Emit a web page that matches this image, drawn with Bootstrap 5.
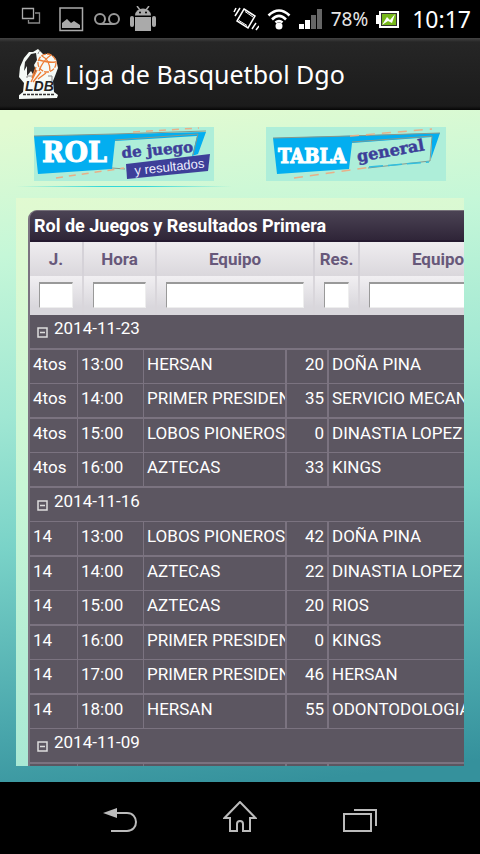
<!DOCTYPE html>
<html lang="es">
<head>
<meta charset="utf-8">
<meta name="viewport" content="width=device-width, initial-scale=1">
<title>Liga de Basquetbol Dgo</title>
<link href="https://cdn.jsdelivr.net/npm/bootstrap@5.3.0/dist/css/bootstrap.min.css" rel="stylesheet">
<style>
body{font-family:Roboto,"Liberation Sans",sans-serif;font-size:17px;line-height:20px;background:#000}
.status-bar{height:38px;padding:0 9px 0 21px;font-family:"Noto Sans",sans-serif;color:#e6e6e6}
.status-bar svg,.app-bar svg,.sys-nav svg,.tab-link svg{display:block;flex:none}
.left-icons{gap:10px}
.battery-text{font-size:19px}
.clock{font-size:23px;color:#fff}
.app-bar{height:72px;padding-left:19px;background:linear-gradient(#444 0,#262626 4px,#1b1b1b 68px,#050505 72px)}
.app-title{font-family:"Noto Sans",sans-serif;font-size:25px;line-height:36px;color:#fff}
.page-area{min-height:0;background:linear-gradient(173deg,#e3fbd1 2%,#c5f7d8 20%,#a0e7d3 42%,#7ad3c8 60%,#4ba8ad 84%,#35919c 97%);padding:17px 16px 16px}
.tab-link{display:block;padding-bottom:6px}
.tab-link.active{background:linear-gradient(90deg,transparent,#34d8d8 40%,#34d8d8 60%,transparent) bottom/100% 1px no-repeat}
.panel-box{background:linear-gradient(170deg,#e1fad1,#c8f6d6 45%,#a0e5d4);margin-top:11px;padding:12px 0 0 12px;min-height:0}
.grid-box{width:620px;border-left:2px solid #7b7380;border-top:1px solid #77727a;border-radius:9px 9px 0 0;overflow:hidden;background:#5c5661}
.grid-title{height:31px;padding:0 4px;font-size:18px;line-height:30px;color:#fff;background:linear-gradient(#4b4354,#2f2538);border-bottom:2px solid #251a30}
.grid-box table{table-layout:fixed;border-collapse:separate;border-spacing:0;margin:0}
.head-grid th{height:34px;padding:0;text-align:center;font-size:17px;color:#67587a;background:linear-gradient(#efedf0,#dad7dc);border-right:2px solid #d5d2d8}
.head-grid td{height:39px;padding:6px 9px 7px;vertical-align:top;background:linear-gradient(#f1eff2,#d9d7dc 80%);border-right:2px solid #d9d6db}
.filter-box{display:block;width:100%;height:26px;padding:0 4px;border:2px solid;border-width:2px 1px 1px 1px;border-color:#999 #eee #eee #999;border-radius:0;background:#fff}
.data-grid td{height:34px;padding:0 3px;line-height:29px;vertical-align:top;color:#fff;white-space:nowrap;overflow:hidden;border-right:1px solid #7b7380;border-bottom:1px solid #7b7380}
.data-grid tr:nth-child(odd) td{height:35px;border-bottom-width:2px}
.data-grid td:nth-child(3),.data-grid td:nth-child(4){border-right-width:2px}
.data-grid td:nth-child(4){text-align:right}
.data-grid .date-row td{padding-left:7px;line-height:26px}
.fold-btn{width:11px;height:11px;padding:0;border:0;background:none;margin-right:6px;display:inline-block;line-height:0;vertical-align:-4px}
.fold-btn svg{display:block}
.sys-nav{height:72px;padding:0 103px}
.sys-nav button{padding:0;border:0;background:none}
.scroll-clip{height:100vh}
</style>
<script src="https://cdn.jsdelivr.net/npm/bootstrap@5.3.0/dist/js/bootstrap.bundle.min.js"></script>
</head>
<body>
<div class="scroll-clip d-flex flex-column overflow-hidden">
<div class="status-bar flex-shrink-0 d-flex align-items-center justify-content-between">
  <div class="left-icons d-flex align-items-center">
    <svg class="me-2" width="20" height="24" viewBox="0 0 20 24" fill="none" stroke="#aaa" stroke-width="1.3"><path d="M1.500 1.500h11v10h-11z"/><path stroke="#888" d="M14 6h4.500v10h-11v-3"/></svg>
    <svg width="25" height="25" viewBox="0 0 25 25"><path fill="none" stroke="#aaa" stroke-width="1.500" d="M1 1h22.500v22.500H1z"/><path fill="#aaa" d="M3 21v-5l5-4 4 4 3-2 6 4v3z"/></svg>
    <svg width="26" height="14" viewBox="0 0 26 14" fill="none" stroke="#999" stroke-width="2"><circle cx="6" cy="7" r="5"/><circle cx="20" cy="7" r="5"/><path d="M6 12h14"/></svg>
    <svg width="26" height="26" viewBox="0 0 26 26" fill="#aaa"><path d="M5 9.500a8 7 0 0 1 16 0z"/><path d="M7 0l3 4M19 0l-3 4" stroke="#aaa" stroke-width="1.500"/><circle cx="10" cy="6.500" r="1" fill="#000"/><circle cx="16" cy="6.500" r="1" fill="#000"/><path d="M5 11h16v14H5z"/><rect y="10" width="4" height="11" rx="2"/><rect x="22" y="10" width="4" height="11" rx="2"/></svg>
  </div>
  <div class="d-flex align-items-center gap-2">
    <svg width="26" height="24" viewBox="0 0 26 24" fill="none" stroke="#fff" stroke-width="1.500"><path d="M11 2l11 7-7 12-11-7z"/><path stroke-width="1" d="M12 4.500l8 5.500M6 13.500l8 5"/><path d="M1 5l2-4M2 9l5-8M19 22l4-6M23 23l3-4"/></svg>
    <svg width="24" height="22" viewBox="0 0 24 22"><g fill="none" stroke="#fff" stroke-width="2.600"><path d="M1.500 7.500q10.500-10 21 0M5 11.500q7-7 14 0M8.500 14.500q3.500-3 7 0"/></g><circle cx="12" cy="18" r="3.500" fill="#fff"/></svg>
    <svg class="ms-n1" width="24" height="20" viewBox="0 0 24 20"><path fill="#fff" d="M0 15h5v5H0zM6 11h5v9H6z"/><path fill="#666" d="M12 6h5v14h-5zM18 0h5v20h-5z"/></svg>
    <span class="battery-text">78%</span>
    <svg width="24" height="17" viewBox="0 0 24 17"><path fill="#fff" d="M3 0h20v17H3v-4H0V4h3z"/><path fill="#333" d="M5 2h16v13H5z"/><path fill="#77b81b" d="M6 3h14v11H6z"/><path fill="#fff" d="M6 14l5-8 3 3 5-6-3 9-4-2z"/></svg>
    <span class="clock ms-1">10:17</span>
  </div>
</div>
<header class="app-bar flex-shrink-0 d-flex align-items-center">
  <svg width="46" height="50" viewBox="0 0 46 50"><path fill="#f5faf7" d="M5 9l5-6 4 0 5-3 5 5 7 0 6 5 2 9-3 8-2 5 1 11 4 3-1 3-38 1-1-3 5-4 1-9-5-6 1-10z"/><path fill="#292929" d="M12 5l5-1 1 7-3 5 2 6-2 5-3-5-4 5 0-10-3 5 1-9z"/><g fill="none" stroke="#ed7d36" stroke-width="1.300"><circle cx="28" cy="14" r="9" stroke-dasharray="5 1"/><path d="M20 11q11 3 16 2M23 7q8 4 8 15M32 6q-8 5-12 16M18 21l-6 12M22 23l-8 10M27 24l-8 6M17 18l-4 11"/></g><path fill="none" stroke="#888" d="M19 5q1-5 4-1M8 29v-2h5M29 27h4v5"/><text x="6" y="42" font-family="Liberation Sans" font-size="14" font-weight="bold" font-style="italic" fill="#222">LDB</text><path stroke="#333" stroke-width="1.500" stroke-dasharray="3 1" d="M4 45.500h32"/></svg>
  <h1 class="app-title fw-normal m-0">Liga de Basquetbol Dgo</h1>
</header>
<main class="page-area flex-fill d-flex flex-column overflow-hidden">
  <nav class="row gx-3 flex-nowrap flex-shrink-0">
    <div class="col-6"><a class="tab-link active" href="#rol" aria-label="Rol de juego y resultados">
      <svg class="mx-auto" width="180" height="54" viewBox="0 0 180 54"><path fill="#aeeed9" d="M0 0h180v54H0z"/><path fill="#03aef0" d="M0 9l172-4-8 22-6 2 5-20-82 5-3 28-74 5z"/><path fill="none" stroke="#87998c" d="M0 9l80-2 92-3M81 13l83-6-5 21M78 41l13 1"/><path fill="none" stroke="#e8b088" stroke-width="1.500" stroke-dasharray="7 6" d="M99 5l66-4M22 51l68-10"/><path fill="#3d3f99" d="M92 37l84-10-2 17-81 8z"/><g font-family="DejaVu Serif,serif" font-weight="bold"><text x="8" y="35" font-size="27" fill="#fff" stroke="#fff">ROL</text><text transform="translate(88 31) rotate(-5)" font-size="15" fill="#3d3f99" stroke="#3d3f99" stroke-width=".5">de juego</text></g><text transform="translate(101 48) rotate(-6)" font-family="Liberation Sans" font-size="13" fill="#eef">y resultados</text></svg>
    </a></div>
    <div class="col-6"><a class="tab-link" href="#tabla" aria-label="Tabla general">
      <svg class="mx-auto" width="180" height="54" viewBox="0 0 180 54"><path fill="#aeeed9" d="M0 0h180v54H0z"/><path fill="#03aef0" d="M7 11l167-5-9 26 1-22-80 6-3 26-72 5z"/><path fill="none" stroke="#87998c" d="M7 11l77-2 90-3M86 15l80-6-2 25-62 7"/><path fill="none" stroke="#31bfdf" stroke-width="1.500" stroke-dasharray="14 5" d="M103 40l60-5"/><path fill="none" stroke="#e8b088" stroke-width="1.500" stroke-dasharray="9 7" d="M84 9l82-7M28 51l78-11"/><g font-weight="bold"><text x="12" y="36" font-family="DejaVu Serif Condensed,DejaVu Serif,serif" font-size="20" fill="#fff" stroke="#fff">TABLA</text><text transform="translate(92 35) rotate(-10)" font-family="DejaVu Serif,serif" font-size="16" fill="#3d3f99" stroke="#3d3f99" stroke-width=".5">general</text></g></svg>
    </a></div>
  </nav>
  <section class="panel-box flex-fill overflow-hidden">
    <div class="grid-box">
      <h2 class="grid-title fw-bold m-0">Rol de Juegos y Resultados Primera</h2>
      <table class="head-grid w-100">
        <colgroup><col style="width:54px"><col style="width:73px"><col style="width:158px"><col style="width:45px"><col style="width:158px"><col></colgroup>
        <thead>
          <tr><th>J.</th><th>Hora</th><th>Equipo</th><th>Res.</th><th>Equipo</th><th>Res.</th></tr>
          <tr><td><input class="filter-box" type="text" aria-label="J."></td><td><input class="filter-box" type="text" aria-label="Hora"></td><td><input class="filter-box" type="text" aria-label="Equipo"></td><td><input class="filter-box" type="text" aria-label="Res."></td><td><input class="filter-box" type="text" aria-label="Equipo visitante"></td><td><input class="filter-box" type="text" aria-label="Res. visitante"></td></tr>
        </thead>
      </table>
      <table class="data-grid w-100">
        <colgroup><col style="width:48px"><col style="width:66px"><col style="width:143px"><col style="width:42px"><col style="width:143px"><col></colgroup>
        <tbody>
          <tr class="date-row"><td colspan="6"><button class="fold-btn" type="button" aria-label="Contraer"><svg width="11" height="11" fill="none" stroke="#ddd"><path stroke-width="1.500" d="M1 1h9v9H1zM3 5.500h5"/></svg></button>2014-11-23</td></tr>
          <tr><td>4tos</td><td>13:00</td><td>HERSAN</td><td>20</td><td>DOÑA PINA</td><td></td></tr>
          <tr><td>4tos</td><td>14:00</td><td>PRIMER PRESIDENTE</td><td>35</td><td>SERVICIO MECANICO</td><td></td></tr>
          <tr><td>4tos</td><td>15:00</td><td>LOBOS PIONEROS</td><td>0</td><td>DINASTIA LOPEZ</td><td></td></tr>
          <tr><td>4tos</td><td>16:00</td><td>AZTECAS</td><td>33</td><td>KINGS</td><td></td></tr>
          <tr class="date-row"><td colspan="6"><button class="fold-btn" type="button" aria-label="Contraer"><svg width="11" height="11" fill="none" stroke="#ddd"><path stroke-width="1.500" d="M1 1h9v9H1zM3 5.500h5"/></svg></button>2014-11-16</td></tr>
          <tr><td>14</td><td>13:00</td><td>LOBOS PIONEROS</td><td>42</td><td>DOÑA PINA</td><td></td></tr>
          <tr><td>14</td><td>14:00</td><td>AZTECAS</td><td>22</td><td>DINASTIA LOPEZ</td><td></td></tr>
          <tr><td>14</td><td>15:00</td><td>AZTECAS</td><td>20</td><td>RIOS</td><td></td></tr>
          <tr><td>14</td><td>16:00</td><td>PRIMER PRESIDENTE</td><td>0</td><td>KINGS</td><td></td></tr>
          <tr><td>14</td><td>17:00</td><td>PRIMER PRESIDENTE</td><td>46</td><td>HERSAN</td><td></td></tr>
          <tr><td>14</td><td>18:00</td><td>HERSAN</td><td>55</td><td>ODONTODOLOGIA</td><td></td></tr>
          <tr class="date-row"><td colspan="6"><button class="fold-btn" type="button" aria-label="Contraer"><svg width="11" height="11" fill="none" stroke="#ddd"><path stroke-width="1.500" d="M1 1h9v9H1zM3 5.500h5"/></svg></button>2014-11-09</td></tr>
          <tr><td></td><td></td><td></td><td></td><td></td><td></td></tr>
        </tbody>
      </table>
    </div>
  </section>
</main>
<footer class="sys-nav flex-shrink-0 d-flex align-items-center justify-content-between">
  <button type="button" aria-label="Atrás"><svg width="34" height="34" viewBox="0 0 34 34"><path fill="#bbb" d="M0 12l14-5v10z"/><path fill="none" stroke="#bbb" stroke-width="2" d="M13 12h11c12 0 12 18 0 18H8"/></svg></button>
  <button type="button" aria-label="Inicio"><svg width="34" height="34" viewBox="0 0 34 34" fill="none" stroke="#bbb" stroke-width="2"><path d="M17 1L1.500 17H7v13h7v-7q0-3 3-3t3 3v7h7V17h5.500z"/></svg></button>
  <button type="button" aria-label="Recientes"><svg width="34" height="34" viewBox="0 0 34 34" fill="none" stroke="#bbb" stroke-width="2"><path d="M1 13h27v17H1zM11 9h22v16"/></svg></button>
</footer>
</div>
</body>
</html>
